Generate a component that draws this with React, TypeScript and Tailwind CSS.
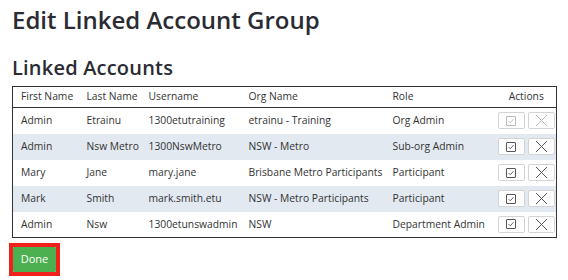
import React from "react";

const rows = [
  { f: "Admin", l: "Etrainu", u: "1300etutraining", o: "etrainu - Training", r: "Org Admin", disabled: true },
  { f: "Admin", l: "Nsw Metro", u: "1300NswMetro", o: "NSW - Metro", r: "Sub-org Admin" },
  { f: "Mary", l: "Jane", u: "mary.jane", o: "Brisbane Metro Participants", r: "Participant" },
  { f: "Mark", l: "Smith", u: "mark.smith.etu", o: "NSW - Metro Participants", r: "Participant" },
  { f: "Admin", l: "Nsw", u: "1300etunswadmin", o: "NSW", r: "Department Admin" },
];

function CheckIcon({ light }: { light?: boolean }) {
  const c = light ? "#b8b8b8" : "#555";
  return (
    <svg width="10" height="10" viewBox="0 0 10 10" fill="none">
      <rect x="0.5" y="0.5" width="9" height="9" rx="0.5" stroke={c} strokeWidth="1" />
      <path d="M2.6 5.1 L4.3 6.8 L7.5 3.2" stroke={c} strokeWidth="0.9" />
    </svg>
  );
}

function XIcon({ light }: { light?: boolean }) {
  const c = light ? "#b8b8b8" : "#555";
  return (
    <svg width="13" height="13" viewBox="0 0 13 13" fill="none">
      <path d="M1 1 L12 12 M12 1 L1 12" stroke={c} strokeWidth="1" />
    </svg>
  );
}

export default function App() {
  return (
    <div
      className="w-[568px] h-[280px] bg-white text-[#2b2b33] overflow-hidden"
      style={{ fontFamily: '"Open Sans", "Noto Sans", sans-serif' }}
    >
      <div className="pl-[12px] pr-[12px]">
        <h1 className="text-[24px] leading-[30px] font-semibold pt-[5px]">Edit Linked Account Group</h1>
        <h2 className="text-[20px] leading-[24px] font-semibold mt-[21px] mb-[6px] tracking-[0.2px]">Linked Accounts</h2>
        <table className="w-[544px] border border-[#333] border-collapse table-fixed text-[10.3px] text-[#333]">
          <colgroup>
            <col className="w-[66px]" />
            <col className="w-[62px]" />
            <col className="w-[100px]" />
            <col className="w-[144px]" />
            <col className="w-[112px]" />
            <col className="w-[60px]" />
          </colgroup>
          <thead>
            <tr className="h-[21px] border-b border-[#333]">
              <th className="font-normal text-left pl-[8px] whitespace-nowrap">First Name</th>
              <th className="font-normal text-left pl-[8px] whitespace-nowrap">Last Name</th>
              <th className="font-normal text-left pl-[8px] whitespace-nowrap">Username</th>
              <th className="font-normal text-left pl-[8px] whitespace-nowrap">Org Name</th>
              <th className="font-normal text-left pl-[8px] whitespace-nowrap">Role</th>
              <th className="font-normal text-center whitespace-nowrap">Actions</th>
            </tr>
          </thead>
          <tbody>
            {rows.map((r, i) => (
              <tr key={i} className={`h-[26px] ${i % 2 === 1 ? "bg-[#e3e9f0]" : "bg-white"}`}>
                <td className="pl-[8px] whitespace-nowrap">{r.f}</td>
                <td className="pl-[8px] whitespace-nowrap">{r.l}</td>
                <td className="pl-[8px] whitespace-nowrap">{r.u}</td>
                <td className="pl-[8px] whitespace-nowrap">{r.o}</td>
                <td className="pl-[8px] whitespace-nowrap">{r.r}</td>
                <td>
                  <div className="flex justify-center gap-[3px]">
                    <button className="w-[27px] h-[17px] bg-white border border-[#d4d4d4] rounded-[2px] flex items-center justify-center">
                      <CheckIcon light={r.disabled} />
                    </button>
                    <button className="w-[27px] h-[17px] bg-white border border-[#d4d4d4] rounded-[2px] flex items-center justify-center">
                      <XIcon light={r.disabled} />
                    </button>
                  </div>
                </td>
              </tr>
            ))}
          </tbody>
        </table>
      </div>
      <div className="pl-[9px] mt-[5px]">
        <div className="inline-block border-[4px] border-[#f0201c]">
          <button className="w-[43px] h-[25px] bg-[#4caf50] text-white text-[11px] rounded-[1px] flex items-center justify-center">
            Done
          </button>
        </div>
      </div>
    </div>
  );
}
